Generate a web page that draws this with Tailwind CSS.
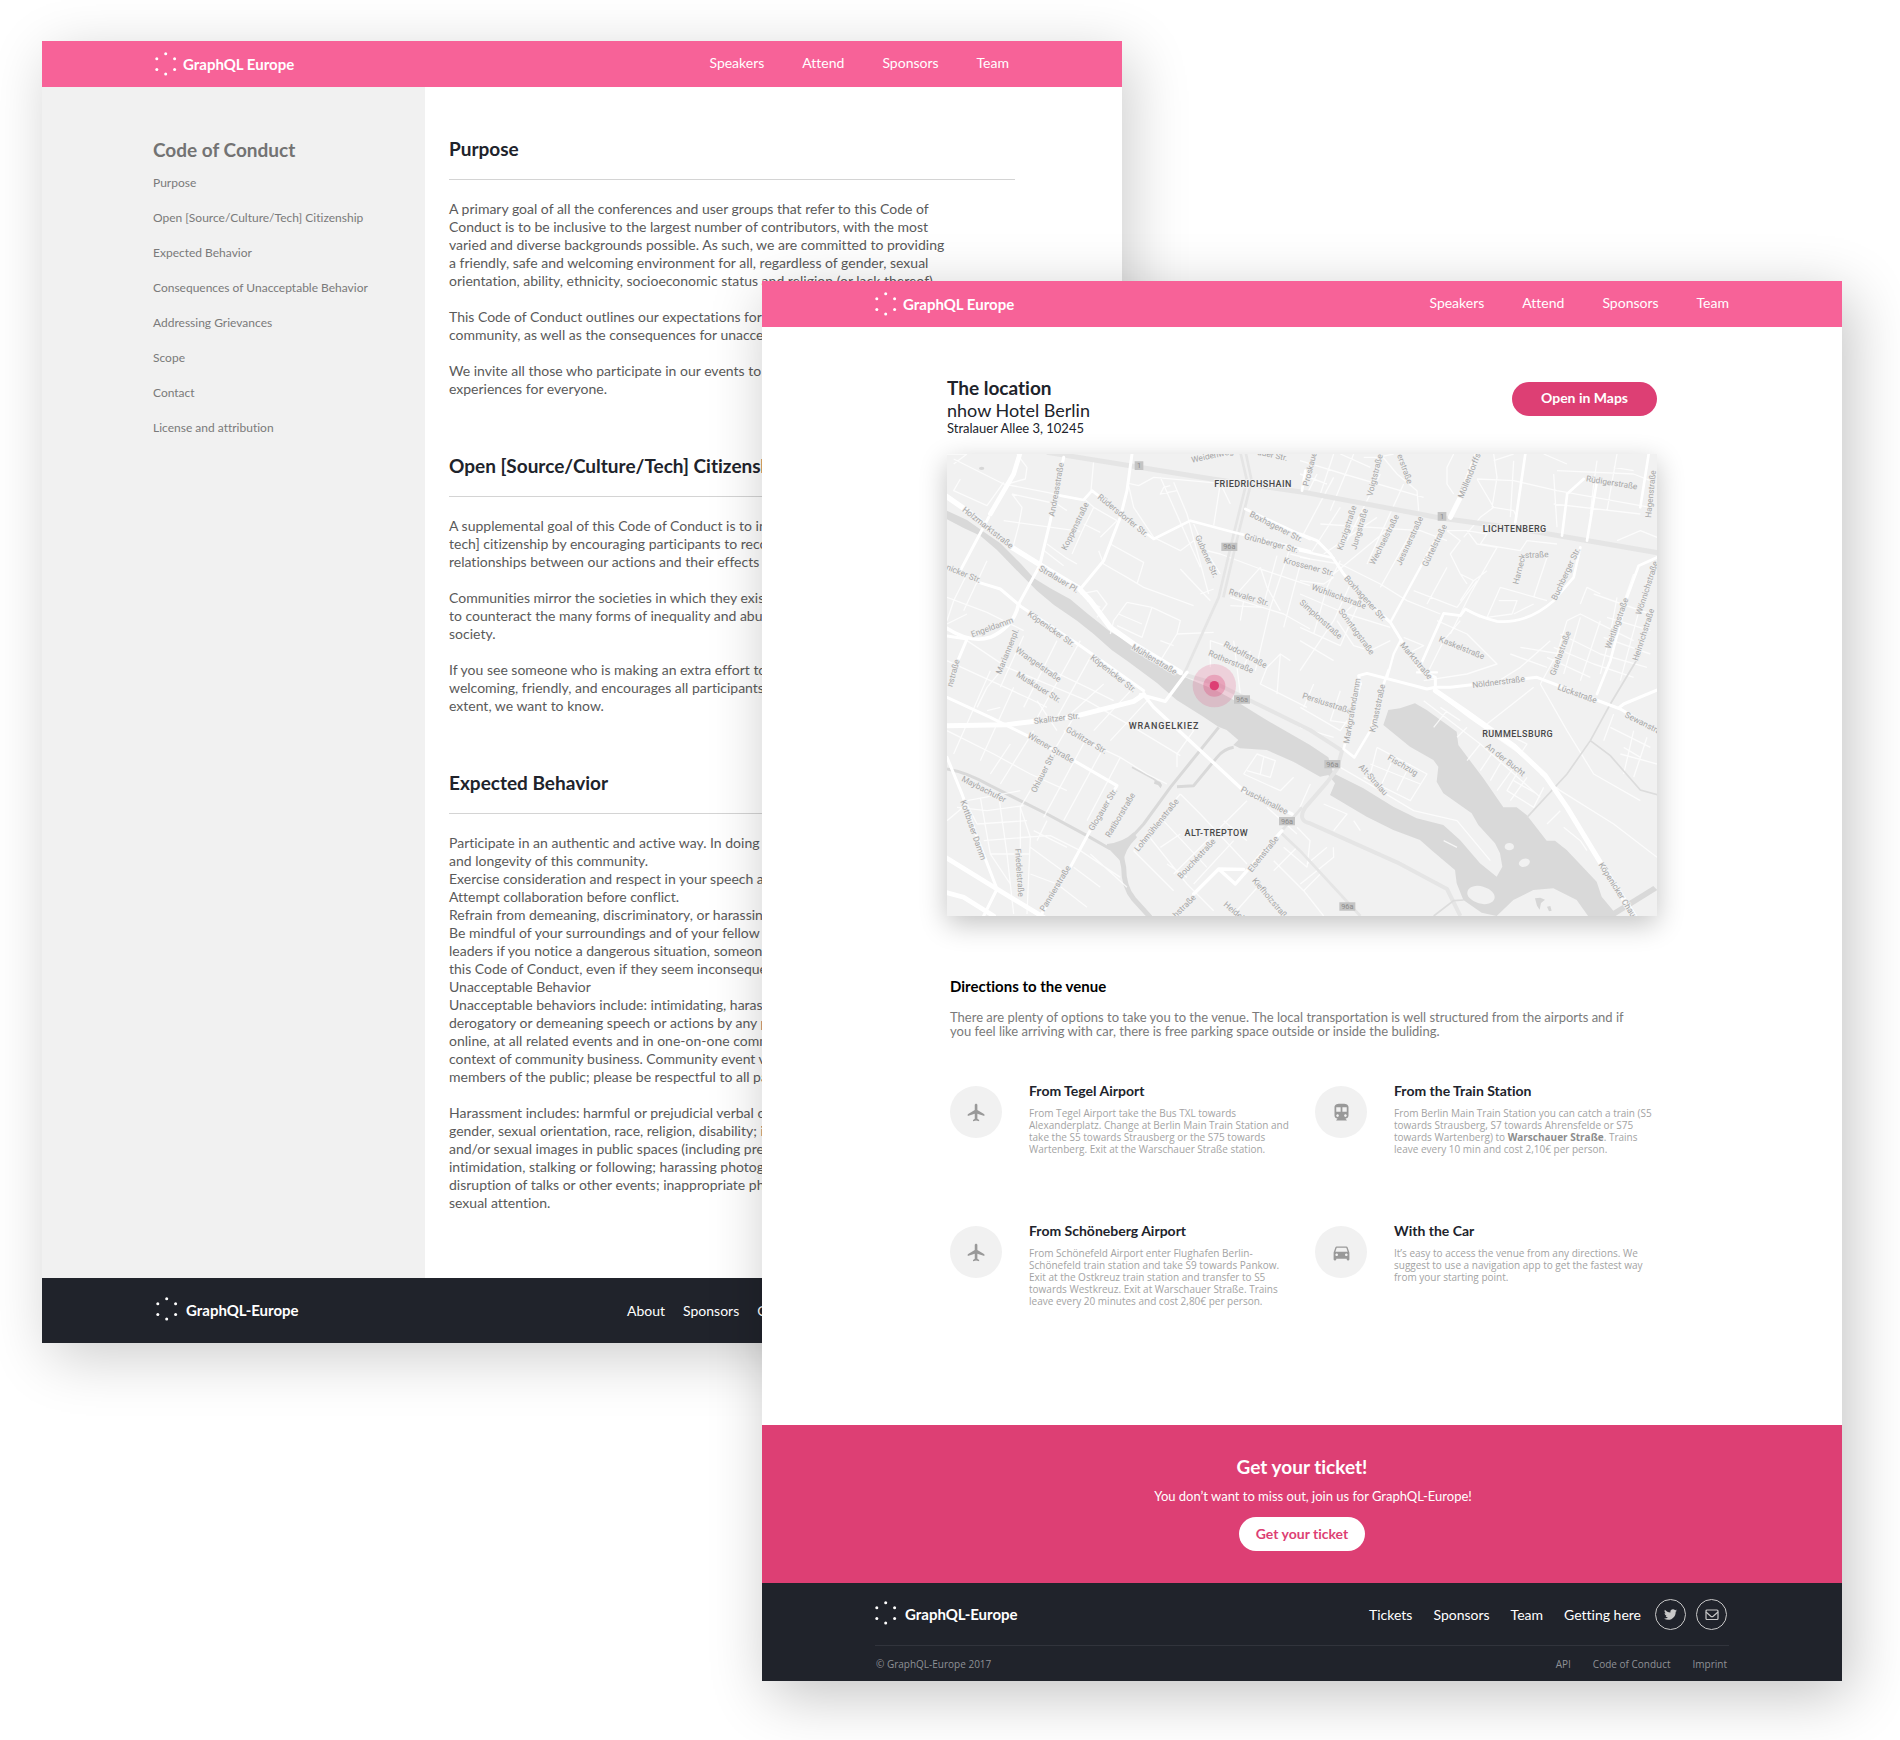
<!DOCTYPE html>
<html lang="en">
<head>
<meta charset="utf-8">
<meta name="viewport" content="width=device-width, initial-scale=1">
<title>GraphQL Europe</title>
<script src="https://cdn.jsdelivr.net/npm/@tailwindcss/browser@4"></script>
</head>
<body class="bg-white font-['Lato',sans-serif] text-[14px] text-[#20232b] [font-variant-ligatures:none]">
<svg class="hidden" aria-hidden="true">
  <symbol id="logo" viewBox="0 0 22 24">
    <g fill="#fff"><circle cx="10.7" cy="1.8" r="1.5"/><circle cx="1.8" cy="6.8" r="1.5"/><circle cx="19.6" cy="6.8" r="1.5"/><circle cx="1.8" cy="17.5" r="1.5"/><circle cx="19.6" cy="17.5" r="1.5"/><circle cx="10.7" cy="22" r="1.5"/></g>
  </symbol>
  <symbol id="plane" viewBox="0 0 24 24"><path d="M21 16v-2l-8-5V3.5c0-.83-.67-1.5-1.5-1.5S10 2.67 10 3.5V9l-8 5v2l8-2.5V19l-2 1.5V22l3.5-1 3.5 1v-1.5L13 19v-5.5l8 2.5z"/></symbol>
  <symbol id="train" viewBox="0 0 24 24"><path d="M12 2c-4.42 0-8 .5-8 4v9.5C4 17.43 5.57 19 7.5 19L6 20.5v.5h12v-.5L16.5 19c1.93 0 3.5-1.57 3.5-3.5V6c0-3.5-3.58-4-8-4zM7.5 17c-.83 0-1.5-.67-1.5-1.5S6.67 14 7.5 14s1.5.67 1.5 1.5S8.33 17 7.5 17zm3.5-6H6V6h5v5zm5.5 6c-.83 0-1.5-.67-1.5-1.5s.67-1.5 1.5-1.5 1.5.67 1.5 1.5-.67 1.5-1.5 1.5zm1.5-6h-5V6h5v5z"/></symbol>
  <symbol id="car" viewBox="0 0 24 24"><path d="M18.92 6.01C18.72 5.42 18.16 5 17.5 5h-11c-.66 0-1.21.42-1.42 1.01L3 12v8c0 .55.45 1 1 1h1c.55 0 1-.45 1-1v-1h12v1c0 .55.45 1 1 1h1c.55 0 1-.45 1-1v-8l-2.08-5.99zM6.5 16c-.83 0-1.5-.67-1.5-1.5S5.67 13 6.5 13s1.5.67 1.5 1.5S7.33 16 6.5 16zm11 0c-.83 0-1.5-.67-1.5-1.5s.67-1.5 1.5-1.5 1.5.67 1.5 1.5-.67 1.5-1.5 1.5zM5 11l1.5-4.5h11L19 11H5z"/></symbol>
</svg>

<div class="grid min-w-[1600px] grid-cols-1 items-start overflow-hidden pb-[59px]">

  <!-- Code of Conduct page -->
  <section class="col-start-1 row-start-1 mt-[41px] ml-[42px] flex w-[calc(100%-820px)] flex-col bg-white shadow-[8px_14px_56px_rgba(0,0,0,0.2)]">
    <header class="flex h-[46px] items-center justify-between bg-[#f76298] px-[113px] text-white">
      <a href="#" class="flex items-center gap-[6px] text-[15px] font-bold"><svg class="h-6 w-[22px]"><use href="#logo"/></svg>GraphQL Europe</a>
      <nav class="flex gap-[38px] pb-1"><a href="#">Speakers</a><a href="#">Attend</a><a href="#">Sponsors</a><a href="#">Team</a></nav>
    </header>
    <div class="flex">
      <aside class="w-[383px] shrink-0 bg-[#f1f1f1] pt-[51px] pl-[111px] text-[#7a7a7a]">
        <h1 class="text-[19px] leading-6 font-bold text-[#737373]">Code of Conduct</h1>
        <nav class="mt-[3px] flex flex-col text-[12px] leading-[35px]">
          <a href="#purpose">Purpose</a><a href="#citizenship">Open [Source/Culture/Tech] Citizenship</a><a href="#behavior">Expected Behavior</a><a href="#">Consequences of Unacceptable Behavior</a><a href="#">Addressing Grievances</a><a href="#">Scope</a><a href="#">Contact</a><a href="#">License and attribution</a>
        </nav>
      </aside>
      <main class="flex grow flex-col gap-[53px] pt-[47px] pr-[107px] pb-[66px] pl-6 leading-[18px] whitespace-nowrap text-[#5a5a5a]">
        <article id="purpose">
          <h2 class="mb-5 border-b border-[#d4d4d4] pb-[15px] text-[19px] leading-[30px] font-bold text-[#20232b]">Purpose</h2>
          <p>A primary goal of all the conferences and user groups that refer to this Code of<br>Conduct is to be inclusive to the largest number of contributors, with the most<br>varied and diverse backgrounds possible. As such, we are committed to providing<br>a friendly, safe and welcoming environment for all, regardless of gender, sexual<br>orientation, ability, ethnicity, socioeconomic status and religion (or lack thereof).</p>
          <p class="mt-[18px]">This Code of Conduct outlines our expectations for all those who participate in our<br>community, as well as the consequences for unacceptable behavior.</p>
          <p class="mt-[18px]">We invite all those who participate in our events to help us create safe and positive<br>experiences for everyone.</p>
        </article>
        <article id="citizenship">
          <h2 class="mb-5 border-b border-[#d4d4d4] pb-[15px] text-[19px] leading-[30px] font-bold text-[#20232b]">Open [Source/Culture/Tech] Citizenship</h2>
          <p>A supplemental goal of this Code of Conduct is to increase open [source/culture/<br>tech] citizenship by encouraging participants to recognize and strengthen the<br>relationships between our actions and their effects on our community.</p>
          <p class="mt-[18px]">Communities mirror the societies in which they exist and positive action is essential<br>to counteract the many forms of inequality and abuses of power that exist in<br>society.</p>
          <p class="mt-[18px]">If you see someone who is making an extra effort to ensure our community is<br>welcoming, friendly, and encourages all participants to contribute to the fullest<br>extent, we want to know.</p>
        </article>
        <article id="behavior">
          <h2 class="mb-5 border-b border-[#d4d4d4] pb-[15px] text-[19px] leading-[30px] font-bold text-[#20232b]">Expected Behavior</h2>
          <p>Participate in an authentic and active way. In doing so, you contribute to the health<br>and longevity of this community.<br>Exercise consideration and respect in your speech and actions.<br>Attempt collaboration before conflict.<br>Refrain from demeaning, discriminatory, or harassing behavior and speech.<br>Be mindful of your surroundings and of your fellow participants. Alert community<br>leaders if you notice a dangerous situation, someone in distress, or violations of<br>this Code of Conduct, even if they seem inconsequential.<br>Unacceptable Behavior<br>Unacceptable behaviors include: intimidating, harassing, abusive, discriminatory,<br>derogatory or demeaning speech or actions by any participant in our community<br>online, at all related events and in one-on-one communications carried out in the<br>context of community business. Community event venues may be shared with<br>members of the public; please be respectful to all patrons of these locations.</p>
          <p class="mt-[18px]">Harassment includes: harmful or prejudicial verbal or written comments related to<br>gender, sexual orientation, race, religion, disability; inappropriate use of nudity<br>and/or sexual images in public spaces (including presentation slides); deliberate<br>intimidation, stalking or following; harassing photography or recording; sustained<br>disruption of talks or other events; inappropriate physical contact, and unwelcome<br>sexual attention.</p>
        </article>
      </main>
    </div>
    <footer class="flex h-[65px] items-center justify-between bg-[#20232b] px-[114px] text-white">
      <a href="#" class="flex items-center gap-2 text-[15px] font-bold"><svg class="mb-1 h-6 w-[22px]"><use href="#logo"/></svg>GraphQL-Europe</a>
      <nav class="flex w-[381px] gap-[18px]"><a href="#">About</a><a href="#">Sponsors</a><a href="#">Code of Conduct</a><a href="#">Contact</a></nav>
    </footer>
  </section>

  <!-- Location page -->
  <section class="relative col-start-1 row-start-1 mt-[281px] ml-[762px] flex w-[calc(100%-820px)] flex-col bg-white shadow-[8px_14px_56px_rgba(0,0,0,0.24)]">
    <header class="flex h-[46px] items-center justify-between bg-[#f76298] px-[113px] text-white">
      <a href="#" class="flex items-center gap-[6px] text-[15px] font-bold"><svg class="h-6 w-[22px]"><use href="#logo"/></svg>GraphQL Europe</a>
      <nav class="flex gap-[38px] pb-1"><a href="#">Speakers</a><a href="#">Attend</a><a href="#">Sponsors</a><a href="#">Team</a></nav>
    </header>
    <main class="px-[185px] pt-[50px] pb-[118px]">
      <div class="flex items-start justify-between">
        <div>
          <h1 class="text-[19px] leading-[22px] font-bold">The location</h1>
          <p class="text-[18px] leading-[22px]">nhow Hotel Berlin</p>
          <p class="text-[13px] leading-[14px]">Stralauer Allee 3, 10245</p>
        </div>
        <button class="mt-[5px] h-[34px] w-[145px] rounded-full bg-[#dd3f74] pb-1 font-bold text-white">Open in Maps</button>
      </div>
      <svg class="mt-[19px] block w-full shadow-[0_8px_26px_rgba(0,0,0,0.24)]" viewBox="0 0 2130 1386" role="img" aria-label="Map of Berlin around the nhow Hotel" font-family="Roboto, sans-serif">
        <rect width="2130" height="1386" fill="#f1f1f1"/>
        <!-- water -->
        <g fill="#d9d9d9">
          <path d="M-1 170 L60 198 L110 233 L160 268 L220 328 L260 372 L310 403 L370 436 L420 478 L490 533 L570 578 L650 623 L710 668 L805 708 L870 743 L950 793 L1089 873 L1144 910 L1159 958 L1249 1003 L1339 1058 L1409 1093 L1489 1113 L1539 1158 L1599 1228 L1649 1268 L1666 1238 L1659 1198 L1644 1168 L1594 1113 L1574 1078 L1489 1018 L1469 983 L1474 938 L1459 918 L1389 878 L1309 813 L1324 768 L1359 763 L1404 748 L1439 768 L1529 833 L1534 873 L1609 973 L1669 1060 L1709 1060 L1739 1083 L1799 1160 L1824 1160 L1859 1188 L1949 1283 L1964 1328 L1999 1370 L2119 1296 L2131 1308 L2004 1387 L1924 1387 L1889 1338 L1819 1303 L1759 1308 L1699 1338 L1649 1386 L1604 1376 L1549 1338 L1529 1288 L1524 1248 L1459 1193 L1419 1158 L1339 1128 L1259 1088 L1149 1023 L1164 988 L1144 963 L1119 968 L1039 923 L959 888 L879 883 L859 873 L874 858 L839 828 L814 818 L769 788 L689 738 L630 687 L540 620 L494 588 L440 540 L390 500 L320 452 L270 410 L215 355 L150 288 L100 245 L50 222 L-1 195Z"/>
        </g>
        <g fill="#f1f1f1"><ellipse cx="1602" cy="1323" rx="42" ry="26" transform="rotate(15 1602 1323)"/><ellipse cx="1687" cy="1178" rx="14" ry="11"/><ellipse cx="1732" cy="1226" rx="17" ry="12" transform="rotate(-20 1732 1226)"/></g>
        <g fill="none" stroke="#d9d9d9" stroke-linejoin="round">
          <path stroke-width="9" d="M0 945 Q60 955 130 995 L300 1080 L420 1145 L490 1185 M815 820 L670 1000 L590 1110 L540 1165 M860 880 Q830 885 810 910 L740 995 L690 998"/>
          <path stroke-width="15" d="M490 1178 L525 1215 L530 1240 Q530 1300 560 1335 L610 1390"/>
          <path stroke-width="5" d="M555 940 L620 975 L640 990"/>
        </g>
        <path d="M480 1170 Q530 1165 560 1135 L570 1150 Q530 1190 530 1225 L520 1225 Q515 1195 480 1178Z" fill="#d9d9d9"/>
        <g fill="#d6d6d6"><ellipse cx="104" cy="43" rx="8" ry="5"/><path d="M623 980l16 3 6 10-4 10-8-10-12-4zM1764 1333l16-2 14 6-12 10-4 20-8-12zM1800 1358l10-2 4 14-8 2z"/></g>

        <!-- minor streets -->
        <g fill="none" stroke="#fff" stroke-width="4" stroke-opacity=".75" stroke-linejoin="round">
          <path d="M0 0 L60 0 M20 15 L170 90 M40 75 L20 110 L120 155 L170 85 M60 0 L20 30 M210 0 L240 40 L235 75 L180 90 M170 90 L300 115 L345 125 M195 120 L225 160 L215 215 L195 290 M170 200 L400 232 M195 120 L330 150 L360 170 M440 20 L432 110 M415 138 L440 160 L510 200 M440 160 L405 232 L375 300 M410 210 L460 235 M510 200 L460 250 M285 285 L350 335 M300 270 L355 310 L390 330 M455 290 L470 330 L540 370 L590 400 L740 455 M490 270 L590 325 L570 390"/>
          <path d="M545 88 L575 95 L620 70 L820 88 L800 215 M640 70 L760 340 M740 260 L700 290 L620 250 M680 85 L720 180 L785 420 M545 95 L560 160 L620 250 M740 210 L770 280 L820 360 M700 345 L790 440 M760 420 L800 405 M820 88 L850 150 M690 110 L640 120 L650 100 L670 95"/>
          <path d="M760 285 L820 300 L940 345 L1089 395 M940 340 L860 430 M940 340 L960 400 L1000 470 M1030 280 L970 460 L925 650 M990 305 L950 450 M1030 300 L1089 315 M850 430 L1010 480 L1089 525 M850 455 L950 460 M890 440 L880 500 M1060 330 L1010 520 M540 445 L615 460 L585 550 L510 515 M540 445 L500 500 L490 540 M515 480 L585 510 M615 460 L700 500 L690 540 L640 620 M640 560 L680 575 M690 540 L800 535 M400 420 L450 410 L480 450 L450 490 M420 440 L460 460"/>
          <path d="M790 640 L790 560 L850 580 L960 640 L1000 600 L1030 620 M860 560 L880 720 M910 590 L890 640 M960 640 L940 690 L1080 760 M1000 600 L990 720"/>
          <path d="M0 430 L120 475 L230 530 M60 360 L20 440 L0 500 M120 320 L50 470 M0 510 L60 480 M230 545 L160 700 M330 560 L230 760 M400 560 L260 810 M430 610 L330 790 M0 620 L250 735 L300 760 M60 560 L180 640 L420 740 M170 640 L120 700 L90 760 M210 600 L420 700 L500 740"/>
          <path d="M0 830 L140 900 L250 960 L360 1010 M20 900 L130 650 M100 920 L200 700 M190 870 L130 960 M260 830 L160 990 M380 790 L220 1060 L220 1200 M420 850 L290 1090 M470 880 L350 1100 M520 910 L420 1100 M270 740 L330 830 M120 770 L160 760 M470 690 L360 790 M560 700 L440 830 M610 730 L490 860 M420 740 L560 820 L700 905 M350 830 L520 910 L600 960 L660 990 M690 800 L740 830 L690 900 L690 940"/>
          <path d="M60 1040 L220 1010 M30 1060 L120 1070 L230 1055 M90 1110 L240 1100 M110 1160 L300 1145 M130 1200 L250 1200 M50 1030 L90 1110 M100 1030 L130 1200 L190 1290 M155 1025 L180 1200 L200 1380 M220 1060 L250 1150 L240 1380 M220 1150 L310 1145 L400 1190 L520 1270 M260 1130 L360 1180 M250 1260 L330 1290 L420 1360 M0 1100 L60 1050 M250 1180 L360 1260 M300 1100 L270 1160 M380 1240 L460 1300 M430 1200 L540 1300"/>
          <path d="M700 1020 L640 1090 L560 1190 M700 1020 L760 1080 L900 1230 M640 1090 L780 1240 M600 1140 L720 1290 L800 1370 M560 1190 L680 1310 M900 1040 L680 1260 M860 1160 L740 1290 M960 1060 L1050 1140 M830 1100 L900 1160 M640 1180 L700 1140 M660 1230 L720 1270 M940 1290 L860 1380 M980 1250 L1050 1180 M890 960 L930 900 L985 920 L970 970 L900 950 M950 910 L940 960 M890 960 L1000 1010 L1040 970"/>
          <path d="M1050 1120 L1089 1160 L1080 1240 M1010 1180 L1080 1240 M980 1220 L1070 1310 L1130 1386 M1060 1290 L1160 1210 L1159 1180"/>
          <path d="M1059 20 L1190 60 L1430 130 M1160 0 L1120 120 M1220 0 L1150 170 M1059 60 L1140 90 M1180 0 L1270 40 M1250 10 L1290 10 L1340 0 M1300 0 L1350 60 L1410 110 L1415 170 M1110 60 L1080 120 M1160 70 L1059 260 M1300 60 L1200 260 M1370 90 L1260 330 M1120 210 L1420 230 L1500 260 M1090 300 L1180 160 M1290 190 L1130 300 M1330 220 L1160 360 M1390 240 L1300 400 M1059 310 L1180 330 L1300 390 L1380 440 L1480 480 M1180 320 L1140 400 L1100 540 M1210 390 L1160 500 L1059 650 M1160 370 L1130 390 L1059 380 M1059 420 L1200 480 L1330 520 M1059 520 L1180 575 L1230 460 M1170 500 L1220 575 L1270 590 L1330 560 M1059 560 L1160 620 M1250 420 L1190 480"/>
          <path d="M1520 0 L1500 40 L1500 90 L1520 120 M1590 75 L1700 80 L1830 110 L2110 160 M1640 0 L1650 70 L1635 160 M1590 75 L1640 160 L1700 170 L1710 190 M1640 160 L1600 190 L1550 250 M1700 20 L1690 190 M1640 20 L1700 0 M1830 50 L2060 60 M1790 0 L1860 30 M1820 60 L1830 220 M1950 20 L1940 90 L1930 180 M1820 150 L2080 180 M2000 40 L2060 50 M2010 0 L1980 170 M2060 60 L2110 80 M1500 230 L1560 230 L1620 240 L1600 270 L1720 290 L1740 260 L1830 270 M1500 230 L1540 260 L1510 300 L1540 360 L1580 380 L1620 350 M1560 230 L1590 270 L1650 280 L1570 420 L1510 540 M1540 360 L1560 390 M1580 380 L1540 440 M1400 410 L1530 460 L1590 380 M1500 340 L1440 450 M1780 290 L1800 310 L1760 430 M1660 400 L1800 440 M1660 400 L1620 490 L1695 480 L1710 440 L1655 440 M1700 480 L1760 450 M1560 470 L1600 490 M2010 260 L2080 230 L2130 250"/>
          <path d="M1860 500 L1900 480 L1980 520 L2060 560 M1860 500 L1830 600 L1780 690 M1900 490 L1850 660 M1960 500 L1900 680 M1840 540 L1960 600 L2100 640 M1820 580 L1940 630 L2060 670 M1800 610 L1930 670 M1940 420 L2110 480 M2010 430 L1990 540 L1960 660 M2060 360 L2010 500 M2100 380 L2020 680 M1980 490 L2110 530 M1970 550 L2110 600 M1720 580 L1840 600 M1810 560 L1720 640 L1640 690 M1690 600 L1800 640 M1470 500 L1560 540 L1650 630 L1560 660 L1430 680 M1540 500 L1490 560 L1440 660 M1370 550 L1430 575 L1380 600 M1960 420 L1920 400 L1900 450"/>
          <path d="M1430 740 L1600 870 L1780 1030 M1480 760 L1540 800 M1500 770 L1460 820 M1560 820 L1530 850 M1620 810 L1760 700 M1600 870 L1560 920 M1640 890 L1600 950 M1670 910 L1630 980 M1700 940 L1650 1010 M1740 970 L1690 1040 M1790 1000 L1760 1060 L1680 1010 L1720 940 M1700 980 L1770 1020 M1780 960 L1840 1010 L2000 1110 L2130 1210 M1620 830 L1720 900 L1740 870 L1700 850 M1780 690 L1860 830 L1940 960 L2080 1040 M1290 880 L1440 960 L1390 1040 L1250 970 M1290 880 L1270 960 M1340 910 L1300 1000 M1390 930 L1350 1010 M1270 930 L1420 990 M1180 940 L1300 1010 L1400 1070 L1530 1100 L1630 1220"/>
          <path d="M1060 760 L1180 830 L1200 800 M1180 710 L1150 800 L1220 810 M1100 690 L1070 760 M1059 820 L1160 850 M1130 1050 L1200 1080 L1160 1130 M1090 990 L1059 1060 M1140 1180 L1080 1230 M1120 1260 L1070 1310 M1220 1100 L1240 1130 M1490 1160 L1530 1180 M1850 1120 L1900 1160 L1920 1190 M1800 1110 L1840 1070 M1990 820 L2110 880 M2000 780 L1970 860 M2060 830 L2030 960 M2100 850 L2060 970 M2020 900 L2130 930 M2030 880 L2080 910"/>
        </g>

        <!-- grey arterials and railways -->
        <g fill="none" stroke="#e5e5e5" stroke-linejoin="round">
          <path stroke-width="15" d="M300 -5 L800 76 L1089 118 L1480 192 L1700 222 L2131 296"/>
          <path stroke-width="8" d="M880 -5 L900 80 L860 240 L815 430 L710 662"/>
          <path stroke-width="8" d="M896 -5 L914 80 L874 240 L829 430"/>
          <path stroke-width="12" d="M712 662 L810 690 L900 735 L1089 828 L1185 890 L1170 945 L1140 985 L1075 1060 Q1050 1100 1089 1108 L1350 1225 L1500 1305 L1540 1386"/>
          <path stroke-width="8" d="M1000 1135 L1059 1190 L1240 1386 M1000 1135 L1065 1060"/>
        </g>
        <g fill="none" stroke="#dcdcdc" stroke-width="5"><path d="M1740 1090 L1860 960 L1930 860 L1990 750 L2080 600 M1930 860 L1990 905 L2080 1008 L2131 1022 M1460 1386 L1520 1340 L1550 1338"/></g>

        <!-- main roads -->
        <g fill="none" stroke="#fff" stroke-linejoin="round" stroke-linecap="round">
          <path stroke-width="16" d="M-5 125 L60 170 L140 235 L195 280 L275 330 L395 402 L430 440 L490 520 L560 570 L700 655"/>
          <path stroke-width="14" d="M220 -5 L200 60 L130 180"/>
          <path stroke-width="9" d="M125 190 L40 350 M350 10 L310 200 L278 335 L215 450 M555 0 L540 110 L520 190 L470 320 L400 405"/>
          <path stroke-width="11" d="M215 450 Q200 520 130 550 Q70 570 -5 520"/>
          <path stroke-width="9" d="M-5 545 L60 555 L20 650 M95 385 L160 405 L225 460 L400 575 L590 710"/>
          <path stroke-width="8" d="M340 125 L410 138 L435 110 L620 255 L730 200 L860 235 L1089 292 M895 165 L1089 255"/>
          <path stroke-width="9" d="M1059 240 L1110 260 L1150 300 L1190 360 L1250 430 L1330 505 L1370 570 L1420 650 L1465 670 L1465 710 L1570 790 L1700 880 L1795 965"/>
          <path stroke-width="15" d="M1465 710 L1560 775 L1700 875 L1795 965 L1860 1060 L1960 1225 L2065 1390"/>
          <path stroke-width="7" d="M1059 290 L1160 312 M1480 230 L1330 505 M1360 560 L1340 600 L1320 672 M1470 655 L1410 655"/>
          <path stroke-width="15" d="M1590 0 L1540 130 L1510 190"/>
          <path stroke-width="8" d="M1735 0 L1705 205 M1860 120 L1910 75 M1860 125 L1845 245 M1950 80 L1920 260 M1900 280 L1880 370 L1820 440 Q1740 510 1650 502 Q1600 490 1555 465 L1540 485 L1490 478 L1420 635"/>
          <path stroke-width="8" d="M2131 310 L2075 335 L2040 430 L1990 620 L1950 720 M2105 0 L2080 160 M1075 50 L1065 110"/>
          <path stroke-width="9" d="M1240 690 L1235 665 L1260 658 L1440 705 L1465 700 L1510 700 L1770 670 L1900 720 L2020 765 L2131 830 M2131 708 L2030 750 L2015 762"/>
          <path stroke-width="8" d="M1240 690 L1190 885 L1222 910 L1270 830 L1310 690 L1325 648"/>
          <path stroke-width="15" d="M-5 815 L180 812 L380 788 L560 742 L590 722"/>
          <path stroke-width="10" d="M580 722 L655 742 L720 655 M590 722 L620 760 L890 1010 L1035 1080 M1005 1130 L865 1290 L815 1245 L740 1320 M815 1245 L890 1246"/>
          <path stroke-width="9" d="M-5 728 L130 790 L240 845 L390 925 L510 995 L440 1110 L370 1240 L280 1386"/>
          <path stroke-width="9" d="M0 910 L45 1020 L90 1150 L150 1305 L110 1386"/>
          <path stroke-width="14" d="M-5 1210 L150 1305 L290 1390 M-5 1315 L50 1330 L140 1386"/>
        </g>

        <!-- street names -->
        <g fill="#a6a6a6" font-size="25" stroke="#f1f1f1" stroke-width="5" paint-order="stroke" stroke-linejoin="round">
          <text transform="translate(44 170) rotate(38)">Holzmarktstraße</text>
          <text transform="translate(322 188) rotate(-80)">Andreasstraße</text>
          <text transform="translate(358 290) rotate(-64)">Koppenstraße</text>
          <text transform="translate(450 132) rotate(39)">Rüdersdorfer Str.</text>
          <text transform="translate(274 348) rotate(31)">Stralauer Pl.</text>
          <text transform="translate(-4 346) rotate(22)">nicker Str.</text>
          <text transform="translate(76 550) rotate(-20)">Engeldamm</text>
          <text transform="translate(240 484) rotate(35)">Köpenicker Str.</text>
          <text transform="translate(162 662) rotate(-68)">Mariannenpl.</text>
          <text transform="translate(203 592) rotate(35)">Wrangelstraße</text>
          <text transform="translate(206 666) rotate(32)">Muskauer Str.</text>
          <text transform="translate(428 614) rotate(38)">Köpenicker Str.</text>
          <text transform="translate(552 584) rotate(31)">Mühlenstraße</text>
          <text transform="translate(735 26) rotate(-12)">Weidenweg</text>
          <text transform="translate(930 2) rotate(12)">auer Str.</text>
          <text transform="translate(906 186) rotate(27)">Boxhagener Str.</text>
          <text transform="translate(890 254) rotate(15)">Grünberger Str.</text>
          <text transform="translate(744 248) rotate(66)">Gubener Str.</text>
          <text transform="translate(1008 326) rotate(15)">Krossener Str.</text>
          <text transform="translate(844 420) rotate(17)">Revaler Str.</text>
          <text transform="translate(1056 448) rotate(42)">Simplonstraße</text>
          <text transform="translate(828 576) rotate(28)">Rudolfstraße</text>
          <text transform="translate(782 604) rotate(22)">Rotherstraße</text>
          <text transform="translate(16 700) rotate(-75)">nstraße</text>
          <text transform="translate(1084 98) rotate(-76)">Proskauer Str.</text>
          <text transform="translate(1276 128) rotate(-76)">Voigtstraße</text>
          <text transform="translate(1350 4) rotate(70)">erstraße</text>
          <text transform="translate(1548 134) rotate(-68)">Möllendorffstr.</text>
          <text transform="translate(1186 290) rotate(-72)">Kinzigstraße</text>
          <text transform="translate(1228 288) rotate(-74)">Jungstraße</text>
          <text transform="translate(1282 334) rotate(-63)">Wechselstraße</text>
          <text transform="translate(1362 336) rotate(-65)">Jessnerstraße</text>
          <text transform="translate(1440 340) rotate(-64)">Gürtelstraße</text>
          <text transform="translate(1190 374) rotate(48)">Boxhagener Str.</text>
          <text transform="translate(1092 406) rotate(20)">Wühlischstraße</text>
          <text transform="translate(1174 472) rotate(54)">Sonntagstraße</text>
          <text transform="translate(1916 82) rotate(9)">Rüdigerstraße</text>
          <text transform="translate(2112 192) rotate(-84)">Hagenstraße</text>
          <text transform="translate(1714 392) rotate(-76)">Harneck</text>
          <text transform="translate(1734 312) rotate(-2)">straße</text>
          <text transform="translate(1828 440) rotate(-65)">Buchberger Str.</text>
          <text transform="translate(2082 484) rotate(-72)">Wönnichstraße</text>
          <text transform="translate(1990 586) rotate(-70)">Weitlingstraße</text>
          <text transform="translate(2072 622) rotate(-72)">Heinrichstraße</text>
          <text transform="translate(1824 666) rotate(-70)">Giselastraße</text>
          <text transform="translate(1474 562) rotate(22)">Kaskelstraße</text>
          <text transform="translate(1358 574) rotate(50)">Marktstraße</text>
          <text transform="translate(1577 702) rotate(-7)">Nöldnerstraße</text>
          <text transform="translate(1830 706) rotate(20)">Lückstraße</text>
          <text transform="translate(2032 788) rotate(27)">Sewanstraße</text>
          <text transform="translate(1064 732) rotate(18)">Persiusstraße</text>
          <text transform="translate(1206 870) rotate(-80)">Markgrafendamm</text>
          <text transform="translate(1284 836) rotate(-78)">Kynaststraße</text>
          <text transform="translate(1234 940) rotate(48)">Alt-Stralau</text>
          <text transform="translate(1320 916) rotate(30)">Fischzug</text>
          <text transform="translate(1614 880) rotate(38)">An der Bucht</text>
          <text transform="translate(1954 1232) rotate(58)">Köpenicker Chaussee</text>
          <text transform="translate(262 810) rotate(-7)">Skalitzer Str.</text>
          <text transform="translate(355 832) rotate(30)">Görlitzer Str.</text>
          <text transform="translate(240 850) rotate(30)">Wiener Straße</text>
          <text transform="translate(266 1018) rotate(-63)">Ohlauer Str.</text>
          <text transform="translate(42 980) rotate(27)">Maybachufer</text>
          <text transform="translate(40 1042) rotate(71)">Kottbuser Damm</text>
          <text transform="translate(204 1184) rotate(86)">Friedelstraße</text>
          <text transform="translate(438 1132) rotate(-59)">Glogauer Str.</text>
          <text transform="translate(488 1152) rotate(-59)">Ratiborstraße</text>
          <text transform="translate(574 1194) rotate(-51)">Lohmühlenstraße</text>
          <text transform="translate(292 1374) rotate(-59)">Pannierstraße</text>
          <text transform="translate(702 1276) rotate(-47)">Bouchéstraße</text>
          <text transform="translate(880 1012) rotate(27)">Puschkinallee</text>
          <text transform="translate(914 1256) rotate(-51)">Elsenstraße</text>
          <text transform="translate(914 1280) rotate(50)">Kiefholzstraße</text>
          <text transform="translate(828 1354) rotate(40)">Heidelberger</text>
          <text transform="translate(688 1392) rotate(-45)">hstraße</text>
        </g>

        <!-- road shields -->
        <g fill="#c4c4c4"><path d="M563 22h26v26h-26zM823 266h48v25h-48zM1472 174h26v26h-26zM861 724h48v25h-48zM996 1089h48v25h-48zM1132 918h48v25h-48zM1177 1345h48v25h-48z"/></g>
        <g fill="#8c8c8c" font-size="22" text-anchor="middle"><text x="576" y="43">1</text><text x="847" y="286">96a</text><text x="1485" y="195">1</text><text x="885" y="744">96a</text><text x="1020" y="1109">96a</text><text x="1156" y="938">96a</text><text x="1201" y="1365">96a</text></g>

        <!-- districts -->
        <g class="tracking-wider" fill="#484848" font-size="27" font-weight="500" text-anchor="middle" stroke="#f1f1f1" stroke-width="6" paint-order="stroke">
          <text x="918" y="98">FRIEDRICHSHAIN</text><text x="1703" y="234">LICHTENBERG</text><text class="tracking-widest" x="651" y="824">WRANGELKIEZ</text><text x="1712" y="849">RUMMELSBURG</text><text x="808" y="1146">ALT-TREPTOW</text>
        </g>

        <!-- hotel marker -->
        <g fill="#dd3f74"><circle cx="802" cy="695" r="65" fill-opacity=".18"/><circle cx="802" cy="695" r="33" fill-opacity=".3"/><circle cx="802" cy="695" r="14"/></g>
      </svg>

      <div class="mt-[60px] pl-[3px]">
        <h2 class="text-[15px] leading-5 font-bold text-black">Directions to the venue</h2>
        <p class="mt-[14px] text-[13px] leading-[14px] whitespace-nowrap text-[#7a7a7a]">There are plenty of options to take you to the venue. The local transportation is well structured from the airports and if<br>you feel like arriving with car, there is free parking space outside or inside the buliding.</p>
        <div class="mt-[44px] grid grid-cols-2 gap-x-[23px] gap-y-[67px]">
          <article class="flex gap-[27px]">
            <div class="mt-1 flex size-[52px] shrink-0 items-center justify-center rounded-full bg-[#f1f1f1]"><svg class="size-[21px] fill-[#999]"><use href="#plane"/></svg></div>
            <div><h3 class="font-bold leading-[18px]">From Tegel Airport</h3><p class="mt-[7px] font-['Open_Sans',sans-serif] text-[10px] leading-3 whitespace-nowrap text-[#a3a3a3]">From Tegel Airport take the Bus TXL towards<br>Alexanderplatz. Change at Berlin Main Train Station and<br>take the S5 towards Strausberg or the S75 towards<br>Wartenberg. Exit at the Warschauer Straße station.</p></div>
          </article>
          <article class="flex gap-[27px]">
            <div class="mt-1 flex size-[52px] shrink-0 items-center justify-center rounded-full bg-[#f1f1f1]"><svg class="size-[21px] fill-[#999]"><use href="#train"/></svg></div>
            <div><h3 class="font-bold leading-[18px]">From the Train Station</h3><p class="mt-[7px] font-['Open_Sans',sans-serif] text-[10px] leading-3 whitespace-nowrap text-[#a3a3a3]">From Berlin Main Train Station you can catch a train (S5<br>towards Strausberg, S7 towards Ahrensfelde or S75<br>towards Wartenberg) to <strong class="text-[#8c8c8c]">Warschauer Straße</strong>. Trains<br>leave every 10 min and cost 2,10€ per person.</p></div>
          </article>
          <article class="flex gap-[27px]">
            <div class="mt-1 flex size-[52px] shrink-0 items-center justify-center rounded-full bg-[#f1f1f1]"><svg class="size-[21px] fill-[#999]"><use href="#plane"/></svg></div>
            <div><h3 class="font-bold leading-[18px]">From Schöneberg Airport</h3><p class="mt-[7px] font-['Open_Sans',sans-serif] text-[10px] leading-3 whitespace-nowrap text-[#a3a3a3]">From Schönefeld Airport enter Flughafen Berlin-<br>Schönefeld train station and take S9 towards Pankow.<br>Exit at the Ostkreuz train station and transfer to S5<br>towards Westkreuz. Exit at Warschauer Straße. Trains<br>leave every 20 minutes and cost 2,80€ per person.</p></div>
          </article>
          <article class="flex gap-[27px]">
            <div class="mt-1 flex size-[52px] shrink-0 items-center justify-center rounded-full bg-[#f1f1f1]"><svg class="size-[21px] fill-[#999]"><use href="#car"/></svg></div>
            <div><h3 class="font-bold leading-[18px]">With the Car</h3><p class="mt-[7px] font-['Open_Sans',sans-serif] text-[10px] leading-3 whitespace-nowrap text-[#a3a3a3]">It’s easy to access the venue from any directions. We<br>suggest to use a navigation app to get the fastest way<br>from your starting point.</p></div>
          </article>
        </div>
      </div>
    </main>

    <div class="flex flex-col items-center bg-[#dd3f74] pt-[30px] pb-8 text-white">
      <h2 class="text-[19px] leading-6 font-bold">Get your ticket!</h2>
      <p class="mt-2 pl-[22px] text-[13px] leading-[18px]">You don’t want to miss out, join us for GraphQL-Europe!</p>
      <button class="mt-3 h-[34px] w-[126px] rounded-full bg-white pb-[2px] font-bold text-[#dd3f74]">Get your ticket</button>
    </div>
    <footer class="bg-[#20232b] px-[113px] pt-4 pb-[10px] text-white">
      <div class="flex h-[47px] items-start justify-between border-b border-[#31343c]">
        <a href="#" class="flex h-[31px] items-center gap-2 text-[15px] font-bold"><svg class="mb-1 h-6 w-[22px]"><use href="#logo"/></svg>GraphQL-Europe</a>
        <div class="flex h-[31px] items-center gap-[10px] pr-[2px]">
          <nav class="mr-1 flex gap-[21px]"><a href="#">Tickets</a><a href="#">Sponsors</a><a href="#">Team</a><a href="#">Getting here</a></nav>
          <a href="#" aria-label="Twitter" class="flex size-[31px] items-center justify-center rounded-full border border-[#c8c8c8]"><svg viewBox="0 0 24 24" class="size-[13px] fill-[#c8c8c8]"><path d="M23.953 4.57a10 10 0 01-2.825.775 4.958 4.958 0 002.163-2.723c-.951.555-2.005.959-3.127 1.184a4.92 4.92 0 00-8.384 4.482C7.69 8.095 4.067 6.13 1.64 3.162a4.822 4.822 0 00-.666 2.475c0 1.71.87 3.213 2.188 4.096a4.904 4.904 0 01-2.228-.616v.06a4.923 4.923 0 003.946 4.827 4.996 4.996 0 01-2.212.085 4.936 4.936 0 004.604 3.417 9.867 9.867 0 01-6.102 2.105c-.39 0-.779-.023-1.17-.067a13.995 13.995 0 007.557 2.209c9.053 0 13.998-7.496 13.998-13.985 0-.21 0-.42-.015-.63A9.935 9.935 0 0024 4.59z"/></svg></a>
          <a href="#" aria-label="Email" class="flex size-[31px] items-center justify-center rounded-full border border-[#c8c8c8]"><svg viewBox="0 0 14 12" class="h-3 w-[14px] fill-none stroke-[#c8c8c8]" stroke-width="1.2"><rect x="1" y="1" width="12" height="9.5" rx="1"/><path d="M1 3l4.8 4.2q1.2.9 2.4 0L13 3"/></svg></a>
        </div>
      </div>
      <div class="flex justify-between pt-[11px] pr-[2px] pl-[1px] font-['Open_Sans',sans-serif] text-[10px] leading-[14px] text-[#8f9196]">
        <p>© GraphQL-Europe 2017</p>
        <nav class="flex gap-[22px]"><a href="#">API</a><a href="#">Code of Conduct</a><a href="#">Imprint</a></nav>
      </div>
    </footer>
  </section>
</div>
</body>
</html>
